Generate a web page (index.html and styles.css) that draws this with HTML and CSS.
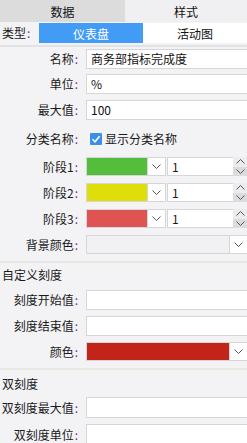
FILE: index.html
```html
<!DOCTYPE html>
<html lang="zh">
<head>
<meta charset="utf-8">
<link rel="stylesheet" href="styles.css">
</head>
<body>
<div class="panel">
  <div class="tabs">
    <div class="tab tab-active">数据</div>
    <div class="tab">样式</div>
  </div>
  <div class="type-row">
    <span class="type-label">类型<span class="colon">:</span></span>
    <div class="seg">
      <div class="seg-item seg-on">仪表盘</div>
      <div class="seg-item">活动图</div>
    </div>
  </div>

  <div class="form">
    <div class="row"><label class="lbl">名称<span class="colon">:</span></label><div class="input">商务部指标完成度</div></div>
    <div class="row row-tight"><label class="lbl">单位<span class="colon">:</span></label><div class="input">%</div></div>
    <div class="row"><label class="lbl">最大值<span class="colon">:</span></label><div class="input">100</div></div>
    <div class="row row-check"><label class="lbl">分类名称<span class="colon">:</span></label>
      <div class="check"><span class="box"><svg width="12" height="12" viewBox="0 0 12 12"><path d="M2.5 6.2 L5 8.7 L9.6 3.2" fill="none" stroke="#fff" stroke-width="1.6"/></svg></span>显示分类名称</div>
    </div>
    <div class="row row-stage"><label class="lbl">阶段1<span class="colon">:</span></label>
      <div class="stage">
        <div class="swatch green"></div>
        <div class="dd"><svg width="9" height="5" viewBox="0 0 9 5"><path d="M0.5 0.5 L4.5 4.5 L8.5 0.5" fill="none" stroke="#555" stroke-width="1"/></svg></div>
        <div class="num">1</div>
        <div class="spin"><span class="sp up"><svg width="9" height="5" viewBox="0 0 9 5"><path d="M0.5 4.5 L4.5 0.5 L8.5 4.5" fill="none" stroke="#555" stroke-width="1"/></svg></span><span class="sp down"><svg width="9" height="5" viewBox="0 0 9 5"><path d="M0.5 0.5 L4.5 4.5 L8.5 0.5" fill="none" stroke="#555" stroke-width="1"/></svg></span></div>
      </div>
    </div>
    <div class="row row-stage"><label class="lbl">阶段2<span class="colon">:</span></label>
      <div class="stage">
        <div class="swatch yellow"></div>
        <div class="dd"><svg width="9" height="5" viewBox="0 0 9 5"><path d="M0.5 0.5 L4.5 4.5 L8.5 0.5" fill="none" stroke="#555" stroke-width="1"/></svg></div>
        <div class="num">1</div>
        <div class="spin"><span class="sp up"><svg width="9" height="5" viewBox="0 0 9 5"><path d="M0.5 4.5 L4.5 0.5 L8.5 4.5" fill="none" stroke="#555" stroke-width="1"/></svg></span><span class="sp down"><svg width="9" height="5" viewBox="0 0 9 5"><path d="M0.5 0.5 L4.5 4.5 L8.5 0.5" fill="none" stroke="#555" stroke-width="1"/></svg></span></div>
      </div>
    </div>
    <div class="row row-stage"><label class="lbl">阶段3<span class="colon">:</span></label>
      <div class="stage">
        <div class="swatch red"></div>
        <div class="dd"><svg width="9" height="5" viewBox="0 0 9 5"><path d="M0.5 0.5 L4.5 4.5 L8.5 0.5" fill="none" stroke="#555" stroke-width="1"/></svg></div>
        <div class="num">1</div>
        <div class="spin"><span class="sp up"><svg width="9" height="5" viewBox="0 0 9 5"><path d="M0.5 4.5 L4.5 0.5 L8.5 4.5" fill="none" stroke="#555" stroke-width="1"/></svg></span><span class="sp down"><svg width="9" height="5" viewBox="0 0 9 5"><path d="M0.5 0.5 L4.5 4.5 L8.5 0.5" fill="none" stroke="#555" stroke-width="1"/></svg></span></div>
      </div>
    </div>
    <div class="row row-stage"><label class="lbl">背景颜色<span class="colon">:</span></label>
      <div class="select">
        <div class="select-field"></div>
        <div class="dd dd-end"><svg width="9" height="5" viewBox="0 0 9 5"><path d="M0.5 0.5 L4.5 4.5 L8.5 0.5" fill="none" stroke="#555" stroke-width="1"/></svg></div>
      </div>
    </div>
  </div>

  <div class="section sec-scale">
    <div class="section-title">自定义刻度</div>
    <div class="row"><label class="lbl">刻度开始值<span class="colon">:</span></label><div class="input"></div></div>
    <div class="row"><label class="lbl">刻度结束值<span class="colon">:</span></label><div class="input"></div></div>
    <div class="row row-stage"><label class="lbl">颜色<span class="colon">:</span></label>
      <div class="select">
        <div class="select-field field-darkred"></div>
        <div class="dd dd-end"><svg width="9" height="5" viewBox="0 0 9 5"><path d="M0.5 0.5 L4.5 4.5 L8.5 0.5" fill="none" stroke="#555" stroke-width="1"/></svg></div>
      </div>
    </div>
  </div>

  <div class="section sec-dual">
    <div class="section-title">双刻度</div>
    <div class="row"><label class="lbl">双刻度最大值<span class="colon">:</span></label><div class="input"></div></div>
    <div class="row"><label class="lbl">双刻度单位<span class="colon">:</span></label><div class="input"></div></div>
  </div>
</div>
</body>
</html>
```

FILE: styles.css
```css
* { box-sizing: border-box; }
html, body { margin: 0; padding: 0; }
body {
  width: 247px;
  height: 443px;
  overflow: hidden;
  background: #f3f3f6;
  font-family: "Noto Sans CJK SC", "Microsoft YaHei", sans-serif;
  font-size: 12px;
  color: #1a1a1a;
}
.panel { width: 247px; }

.tabs { display: flex; height: 22px; }
.tab {
  display: flex; align-items: center; justify-content: center;
  font-size: 12px; color: #111;
  background: #f0f0f2;
  flex: 0 0 122px;
}
.tab-active { flex: 0 0 125px; background: #dcdcdc; }

.type-row {
  display: flex; align-items: center;
  height: 25px;
  padding: 1px 0 2px 2px;
  border-bottom: 2px solid #e2e2e4;
}
.type-label { width: 37px; line-height: 20px; }
.colon { color: #7a2a7a; margin-left: 1px; }
.seg { display: flex; flex: 1; height: 20px; }
.seg-item {
  flex: 0 0 104px;
  display: flex; align-items: center; justify-content: center;
  background: #fff; color: #111;
}
.seg-item + .seg-item { flex: 1; }
.seg-on { background: #429bf5; color: #fff; }

.form { padding-top: 2px; padding-bottom: 6px; display: flex; flex-direction: column; gap: 6px; }
.row {
  display: grid;
  grid-template-columns: 78px 1fr;
  column-gap: 8px;
  align-items: center;
  height: 20px;
}
.row-tight { margin-top: -1px; }
.lbl { text-align: right; white-space: nowrap; line-height: 20px; }
.input {
  height: 20px;
  background: #fff;
  border: 1px solid #d6d6d8;
  border-right: none;
  padding-left: 4px;
  line-height: 18px;
  color: #111;
}
.row-check { height: 25px; }
.check { display: flex; align-items: center; gap: 3px; padding-left: 4px; }
.box {
  width: 12px; height: 12px; background: #3b8fe8;
  border-radius: 1px; display: flex;
}
.row-stage { height: 20px; align-items: start; }
.row-stage .lbl { line-height: 19px; }
.stage { display: flex; height: 19px; }
.swatch { width: 61px; border: 1px solid #d6d6d8; border-right: none; }
.green { background: #55bd3c; }
.yellow { background: #dede0b; }
.red { background: #e05353; }
.dd {
  width: 19px; background: #fff;
  border: 1px solid #d6d6d8;
  display: flex; align-items: center; justify-content: center;
}
.num {
  width: 66px; margin-left: 1px; background: #fff;
  border: 1px solid #d6d6d8; border-right: none;
  padding-left: 4px; line-height: 17px;
}
.spin { width: 14px; display: flex; flex-direction: column; background: #ececee; }
.sp { flex: 1; display: flex; align-items: center; justify-content: center; }
.sp.down { background: #dcdcde; }
.select { display: flex; height: 19px; }
.select-field { flex: 1; background: #f1f1f3; border: 1px solid #d6d6d8; border-right: none; }
.select-field.field-darkred { background: #c2241a; }
.dd-end { width: 18px; border-right: none; }

.section { border-top: 2px solid #e8e8e2; }
.section-title { padding-left: 2px; }
.sec-scale { display: flex; flex-direction: column; gap: 6px; padding-bottom: 6px; }
.sec-scale .section-title { height: 22px; line-height: 24px; margin-bottom: -1px; }
.sec-dual { display: flex; flex-direction: column; gap: 6px; }
.sec-dual .section-title { height: 21px; line-height: 27px; }
.sec-dual .row { height: 21px; }
.sec-dual .input { height: 21px; }
```
